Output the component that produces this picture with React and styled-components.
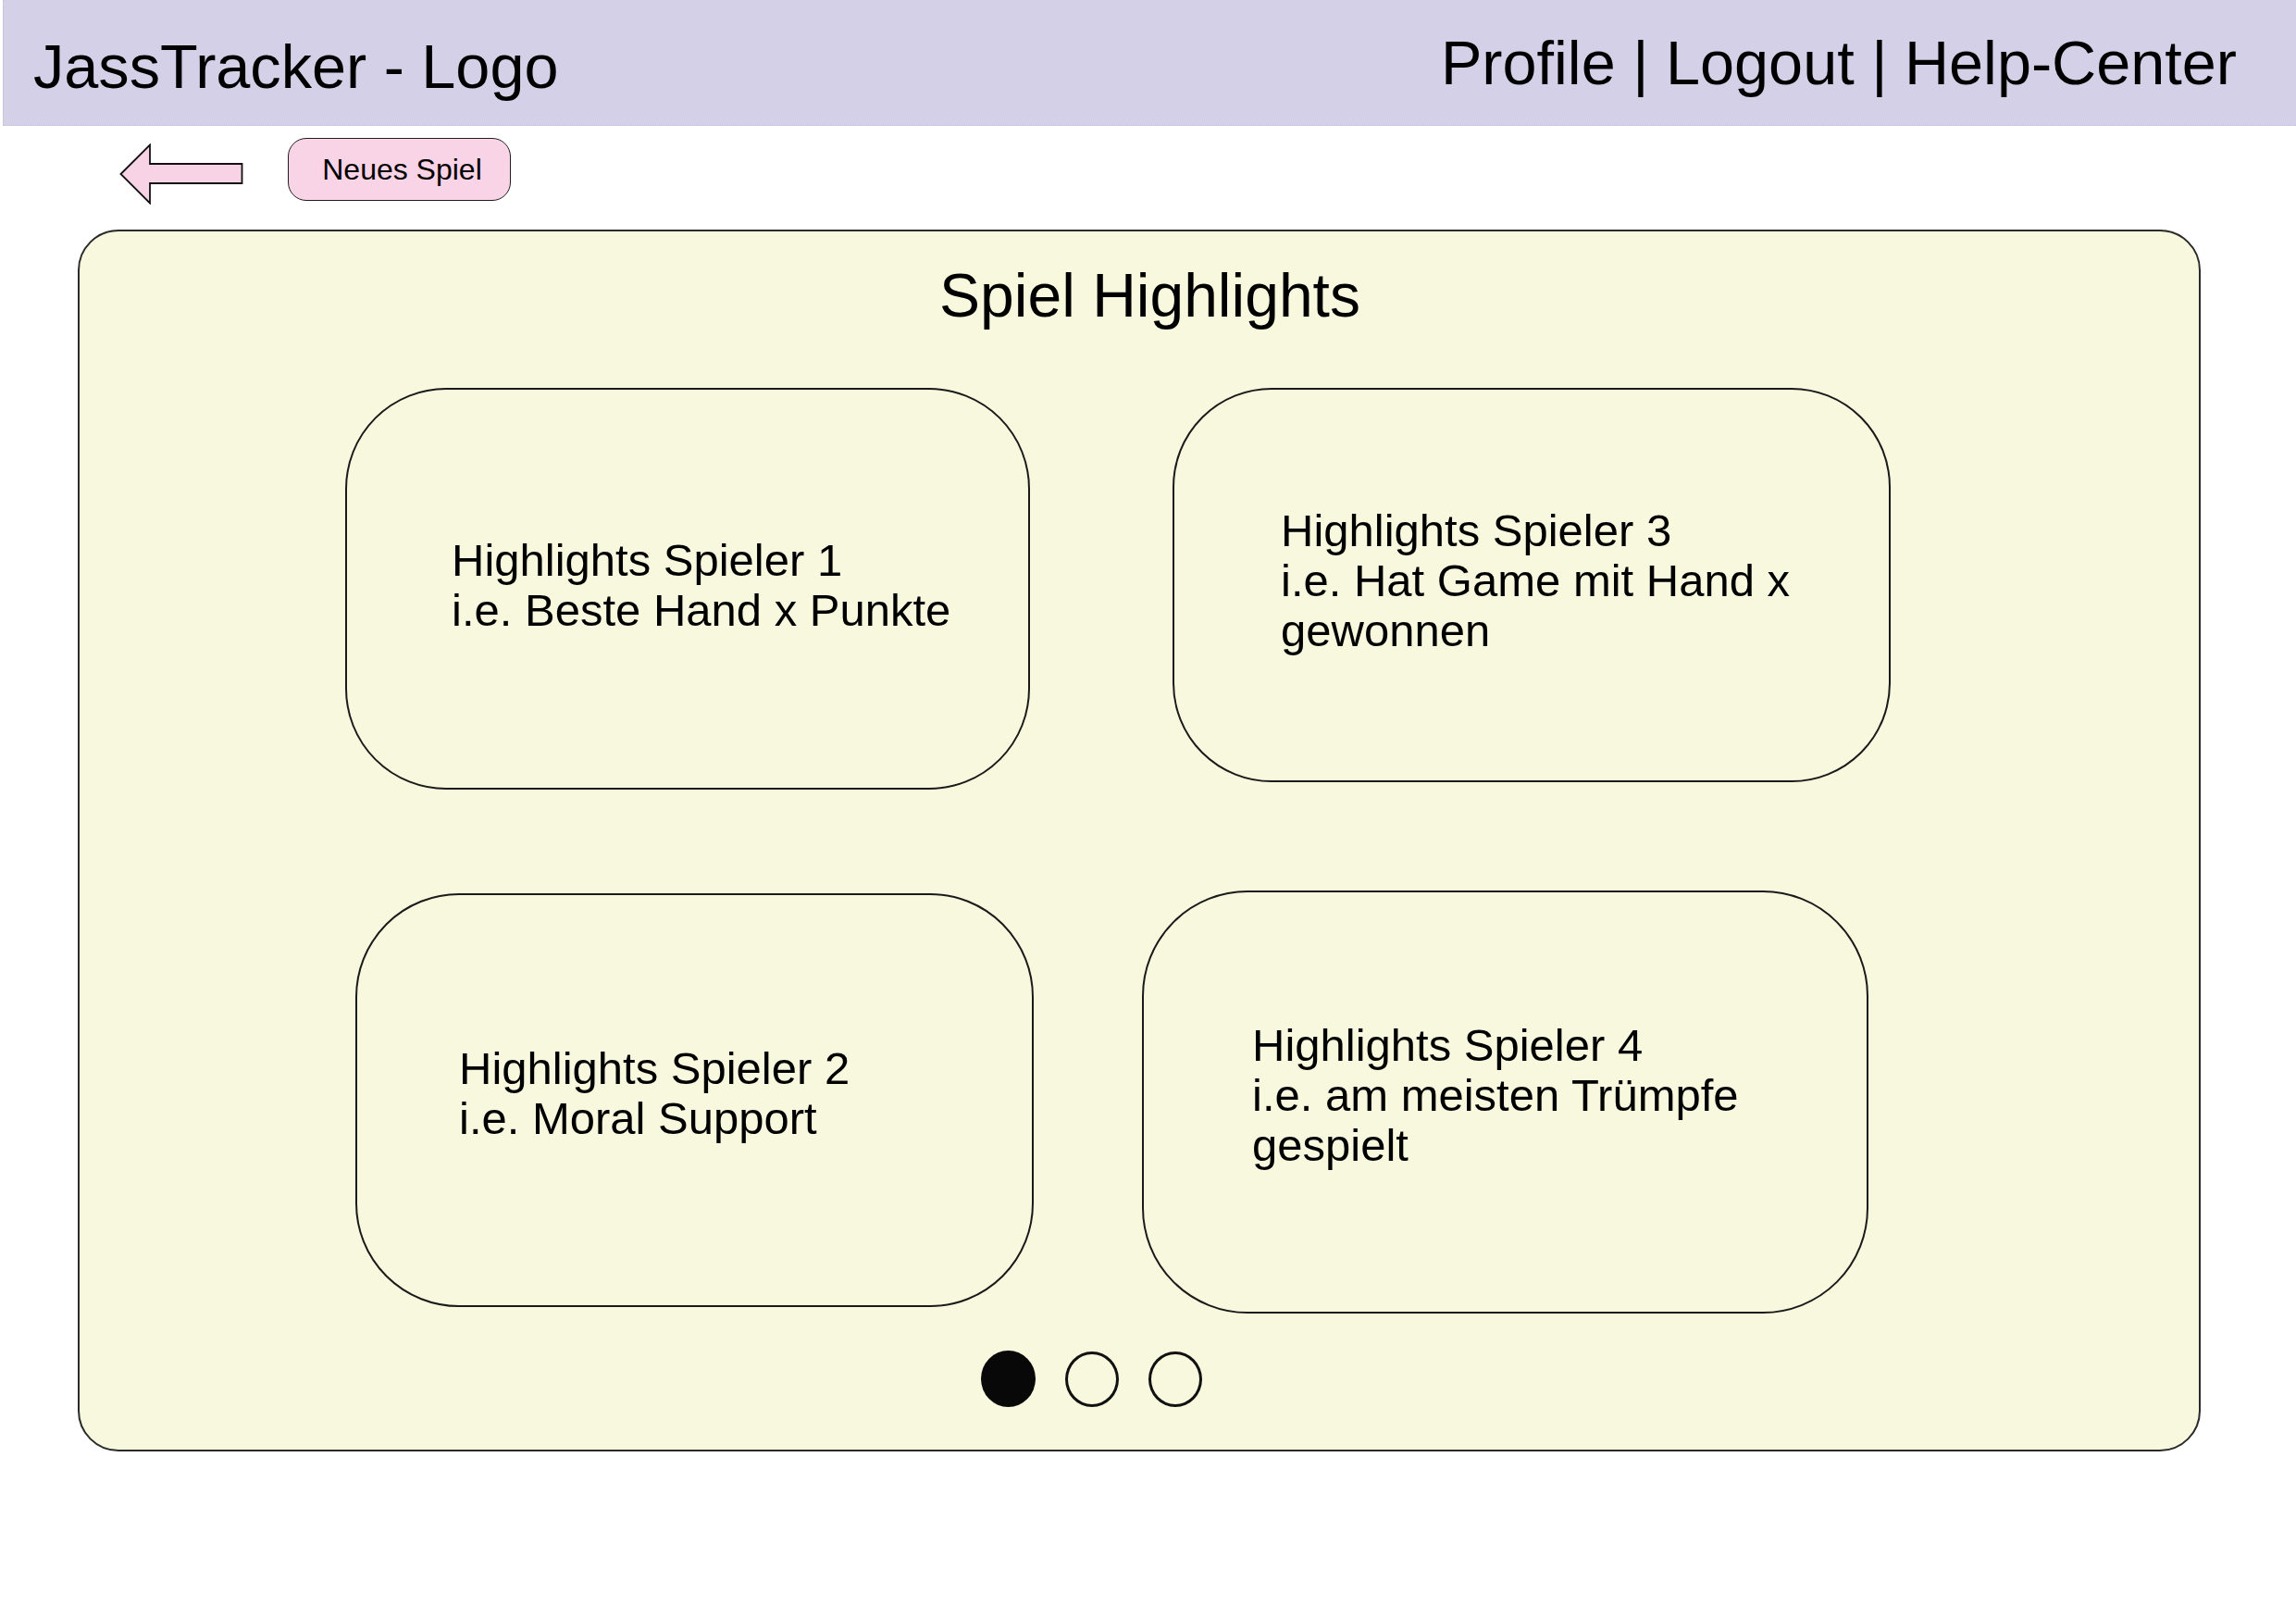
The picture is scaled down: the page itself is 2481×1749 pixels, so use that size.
import React from "react";
import styled, { createGlobalStyle } from "styled-components";

const GlobalStyle = createGlobalStyle`
  html, body {
    margin: 0;
    padding: 0;
    background: #ffffff;
  }
  body {
    font-family: "Liberation Sans", Arial, Helvetica, sans-serif;
    color: #000;
  }
  * { box-sizing: border-box; }
`;

const Page = styled.div`
  width: 2481px;
  height: 1749px;
  display: flex;
  flex-direction: column;
`;

const Header = styled.header`
  height: 136px;
  margin-left: 3px;
  background: #d4d0e8;
  border-bottom: 1px dotted #c4c0dc;
  border-left: 1px dotted #c4c0dc;
  display: flex;
  justify-content: space-between;
  align-items: flex-start;
  padding: 0 64px 0 32px;
`;

const Logo = styled.div`
  font-size: 66.6px;
  line-height: 76px;
  margin-top: ${(p) => p.$top}px;
  white-space: nowrap;
`;

const Toolbar = styled.div`
  display: flex;
  align-items: flex-start;
  margin-top: 13px;
  padding-left: 129px;
  gap: 48px;
`;

const BackArrow = styled.svg`
  display: block;
  margin-top: 6px;
  width: 134px;
  height: 66px;
`;

const PinkButton = styled.button`
  width: 241px;
  height: 68px;
  border: 1.5px solid #1e1e1e;
  border-radius: 20px;
  background: #f9d3e6;
  font-family: "Liberation Sans", Arial, sans-serif;
  font-size: 32px;
  color: #000;
  padding: 0 0 0 6px;
  cursor: pointer;
`;

const Panel = styled.section`
  margin-top: 27px;
  margin-left: 84px;
  width: 2294px;
  height: 1320px;
  border: 2px solid #2b2b2b;
  border-radius: 44px;
  background: #f8f8de;
  display: flex;
  flex-direction: column;
  padding-top: 31px;
`;

const Title = styled.h1`
  margin: 0;
  font-size: 66px;
  line-height: 76px;
  font-weight: normal;
  text-align: center;
  padding-left: 23px;
`;

const CardRow = styled.div`
  display: flex;
  align-items: flex-start;
  margin-top: ${(p) => p.$top}px;
`;

const Card = styled.div`
  width: ${(p) => p.$w}px;
  height: ${(p) => p.$h}px;
  margin-left: ${(p) => p.$left}px;
  margin-top: ${(p) => p.$top || 0}px;
  border: 2px solid #1a1a1a;
  border-radius: ${(p) => Math.round(p.$h * 0.25)}px;
  display: flex;
  align-items: center;
  padding-left: ${(p) => p.$pad}px;
  padding-bottom: ${(p) => p.$lift}px;
`;

const CardText = styled.div`
  font-size: 49px;
  line-height: 54px;
  white-space: nowrap;
`;

const Dots = styled.div`
  display: flex;
  align-items: center;
  gap: 32px;
  margin-top: 40px;
  padding-left: 974px;
`;

const Dot = styled.span`
  display: block;
  width: ${(p) => (p.$filled ? 59 : 58)}px;
  height: ${(p) => (p.$filled ? 61 : 60)}px;
  border-radius: 50%;
  background: ${(p) => (p.$filled ? "#080808" : "transparent")};
  border: ${(p) => (p.$filled ? "none" : "3.5px solid #111")};
`;

const cards = [
  [
    {
      w: 740, h: 434, left: 287, top: 0, pad: 113, lift: 9,
      lines: ["Highlights Spieler 1", "i.e. Beste Hand x Punkte"],
    },
    {
      w: 776, h: 426, left: 154, top: 0, pad: 115, lift: 10,
      lines: ["Highlights Spieler 3", "i.e. Hat Game mit Hand x", "gewonnen"],
    },
  ],
  [
    {
      w: 733, h: 447, left: 298, top: 3, pad: 110, lift: 16,
      lines: ["Highlights Spieler 2", "i.e. Moral Support"],
    },
    {
      w: 785, h: 457, left: 117, top: 0, pad: 117, lift: 15,
      lines: ["Highlights Spieler 4", "i.e. am meisten Trümpfe", "gespielt"],
    },
  ],
];

export default function App() {
  return (
    <>
      <GlobalStyle />
      <Page>
        <Header>
          <Logo $top={34}>JassTracker - Logo</Logo>
          <Logo $top={30}>Profile | Logout | Help-Center</Logo>
        </Header>

        <Toolbar>
          <BackArrow viewBox="0 0 134 66" aria-label="Zurück">
            <polygon
              points="1.5,33 33,1.5 33,22 132.5,22 132.5,43 33,43 33,64.5"
              fill="#f8d3e6"
              stroke="#111"
              strokeWidth="1.8"
              strokeLinejoin="miter"
            />
          </BackArrow>
          <PinkButton>Neues Spiel</PinkButton>
        </Toolbar>

        <Panel>
          <Title>Spiel Highlights</Title>
          {cards.map((row, ri) => (
            <CardRow key={ri} $top={ri === 0 ? 62 : 109}>
              {row.map((c, ci) => (
                <Card
                  key={ci}
                  $w={c.w}
                  $h={c.h}
                  $left={c.left}
                  $top={c.top}
                  $pad={c.pad}
                  $lift={c.lift}
                >
                  <CardText>
                    {c.lines.map((l, li) => (
                      <div key={li}>{l}</div>
                    ))}
                  </CardText>
                </Card>
              ))}
            </CardRow>
          ))}
          <Dots>
            <Dot $filled />
            <Dot />
            <Dot />
          </Dots>
        </Panel>
      </Page>
    </>
  );
}
